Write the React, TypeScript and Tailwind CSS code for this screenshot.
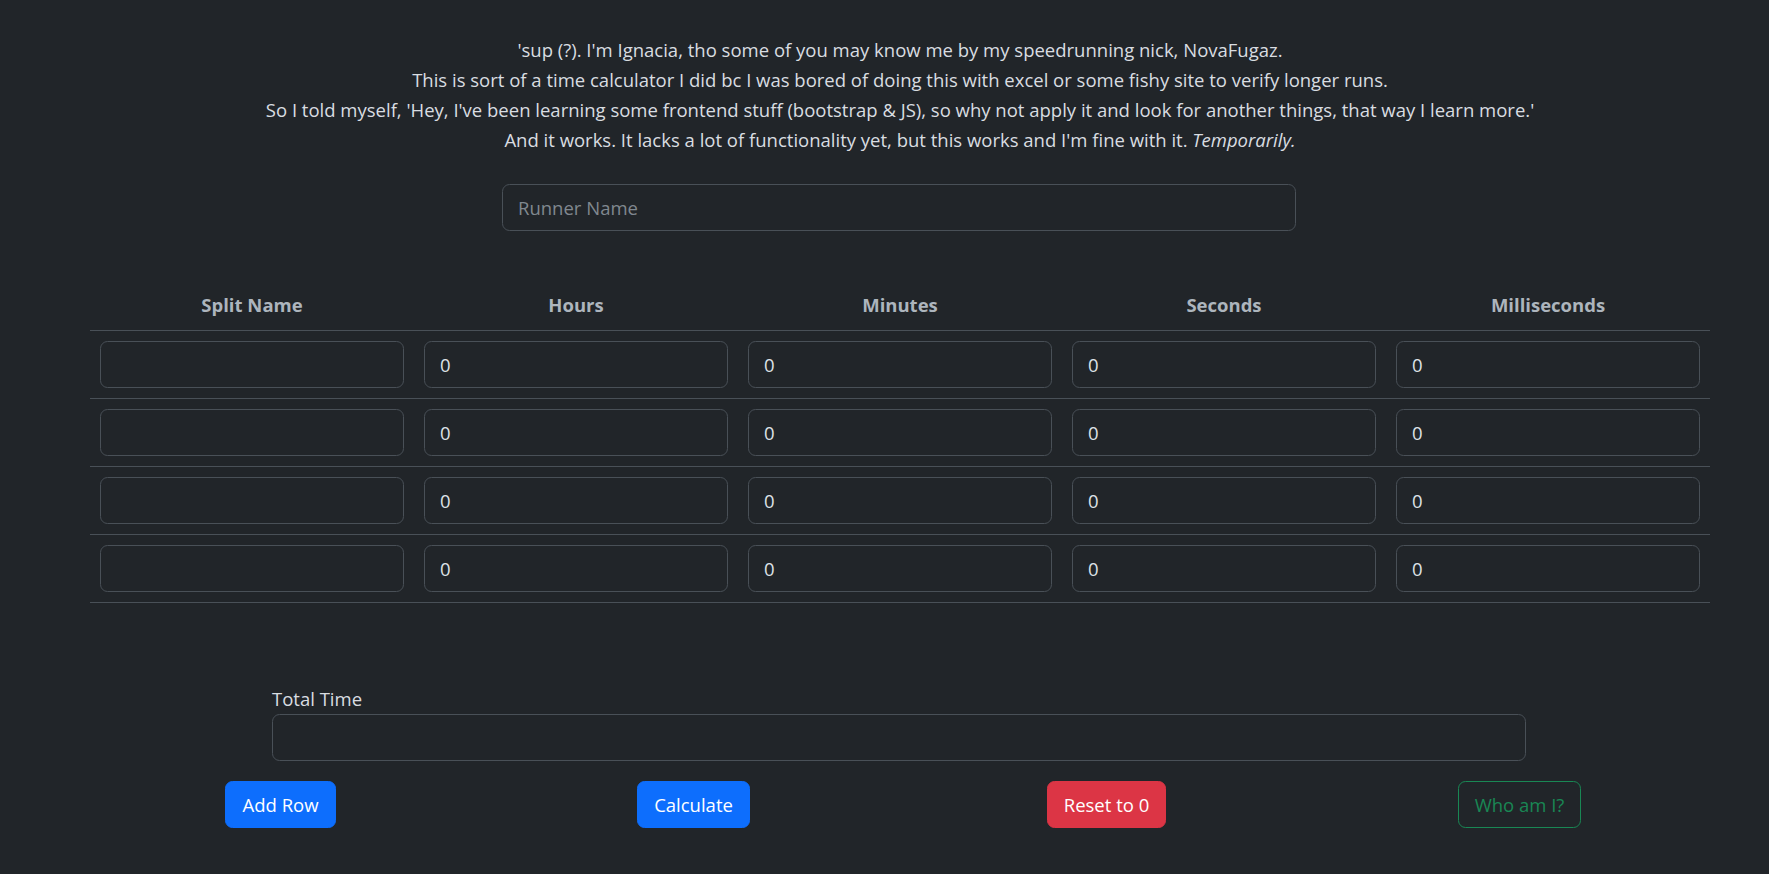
import React from "react"

const COLUMNS = ["Split Name", "Hours", "Minutes", "Seconds", "Milliseconds"]
const ROWS = [0, 1, 2, 3]

const inputClass =
  "block w-full h-[47px] px-[15px] bg-[#212529] text-[#dee2e6] border border-[#495057] rounded-[7.5px] outline-none placeholder:text-[#80888f]"

export default function App() {
  return (
    <div className="min-h-screen bg-[#212529] text-[#d9dde1] font-['Open_Sans',sans-serif] text-[18.5px] leading-[30px]">
      <div className="ml-[90px] w-[1620px] pt-[35px] pb-[40px]">
        {/* Intro */}
        <div className="text-center">
          <p>'sup (?). I'm Ignacia, tho some of you may know me by my speedrunning nick, NovaFugaz.</p>
          <p>This is sort of a time calculator I did bc I was bored of doing this with excel or some fishy site to verify longer runs.</p>
          <p>
            So I told myself, 'Hey, I've been learning some frontend stuff (bootstrap &amp; JS), so why not apply it and look for
            another things, that way I learn more.'
          </p>
          <p>
            And it works. It lacks a lot of functionality yet, but this works and I'm fine with it. <em>Temporarily.</em>
          </p>
        </div>

        {/* Runner name */}
        <div className="mt-[29px] ml-[412px] w-[794px]">
          <input className={inputClass} placeholder="Runner Name" />
        </div>

        {/* Splits table */}
        <table className="mt-[49px] w-full table-fixed border-collapse">
          <thead>
            <tr className="border-b border-[#495057]">
              {COLUMNS.map((c) => (
                <th key={c} className="p-[10px] font-bold text-[#adb5bd] text-center">
                  {c}
                </th>
              ))}
            </tr>
          </thead>
          <tbody>
            {ROWS.map((r) => (
              <tr key={r} className="border-b border-[#495057]">
                {COLUMNS.map((c, i) => (
                  <td key={c} className="p-[10px]">
                    <input className={inputClass} defaultValue={i === 0 ? "" : "0"} />
                  </td>
                ))}
              </tr>
            ))}
          </tbody>
        </table>

        {/* Total */}
        <div className="mt-[81px] ml-[182px] w-[1254px]">
          <label className="block">Total Time</label>
          <input className={inputClass} readOnly />
        </div>

        {/* Actions */}
        <div className="mt-[20px] -mx-[16px] grid grid-cols-4 justify-items-center">
          <button className="h-[47px] px-[16px] rounded-[7.5px] bg-[#0d6efd] text-white border border-[#0d6efd]">
            Add Row
          </button>
          <button className="h-[47px] px-[16px] rounded-[7.5px] bg-[#0d6efd] text-white border border-[#0d6efd]">
            Calculate
          </button>
          <button className="h-[47px] px-[16px] rounded-[7.5px] bg-[#dc3545] text-white border border-[#dc3545]">
            Reset to 0
          </button>
          <button className="h-[47px] px-[16px] rounded-[7.5px] bg-transparent text-[#198754] border border-[#198754]">
            Who am I?
          </button>
        </div>
      </div>
    </div>
  )
}
